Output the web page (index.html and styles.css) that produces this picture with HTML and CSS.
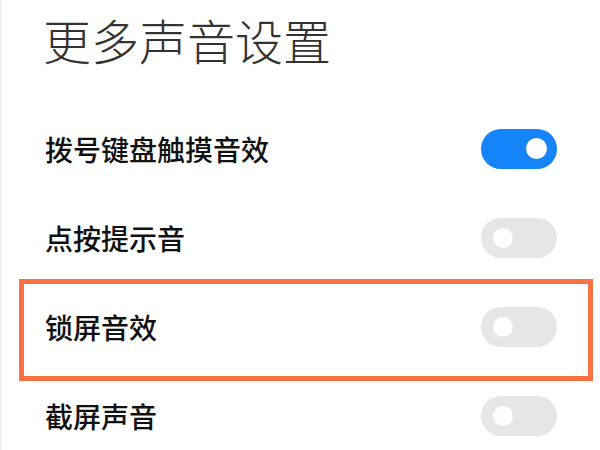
FILE: index.html
```html
<!DOCTYPE html>
<html lang="zh-CN">
<head>
    <meta charset="UTF-8">
    <meta name="viewport" content="width=device-width, initial-scale=1.0">
    <title>更多声音设置</title>
    <link rel="stylesheet" href="styles.css">
</head>
<body>
    <div class="page">
        <h1 class="title">更多声音设置</h1>
        <div class="settings">
            <div class="row">
                <span class="label">拨号键盘触摸音效</span>
                <span class="switch on"><span class="knob"></span></span>
            </div>
            <div class="row">
                <span class="label">点按提示音</span>
                <span class="switch"><span class="knob"></span></span>
            </div>
            <div class="row highlight">
                <span class="label">锁屏音效</span>
                <span class="switch"><span class="knob"></span></span>
            </div>
            <div class="row">
                <span class="label">截屏声音</span>
                <span class="switch"><span class="knob"></span></span>
            </div>
        </div>
    </div>
</body>
</html>
```

FILE: styles.css
```css
body {
    margin: 0;
    padding: 0;
    background-color: #fff;
    font-family: "Noto Sans CJK SC", "Noto Sans", sans-serif;
}
.page {
    width: 600px;
    height: 450px;
    overflow: hidden;
    border-left: 1px solid #ececec;
    box-sizing: border-box;
}
.title {
    margin: 0;
    height: 89px;
    padding: 15px 0 0 42px;
    font-size: 48px;
    line-height: 48px;
    font-weight: 300;
    color: #333;
}
.row {
    position: relative;
    height: 89px;
    display: flex;
    align-items: center;
    justify-content: space-between;
    padding: 0 43px 0 44px;
}
.label {
    font-size: 28px;
    font-weight: 500;
    color: #111;
}
.switch {
    width: 76px;
    height: 40px;
    border-radius: 20px;
    background-color: #e6e6e6;
    display: flex;
    align-items: center;
    padding: 0 12px;
    box-sizing: border-box;
}
.knob {
    width: 20px;
    height: 20px;
    border-radius: 50%;
    background-color: #fff;
}
.switch.on {
    background-color: #1584f8;
    justify-content: flex-end;
    padding: 0 10px;
}
.switch.on .knob {
    width: 21px;
    height: 21px;
}
.highlight::after {
    content: "";
    position: absolute;
    left: 18px;
    right: 7px;
    top: -3px;
    bottom: -10px;
    border: 5px solid #fa7143;
}
```
